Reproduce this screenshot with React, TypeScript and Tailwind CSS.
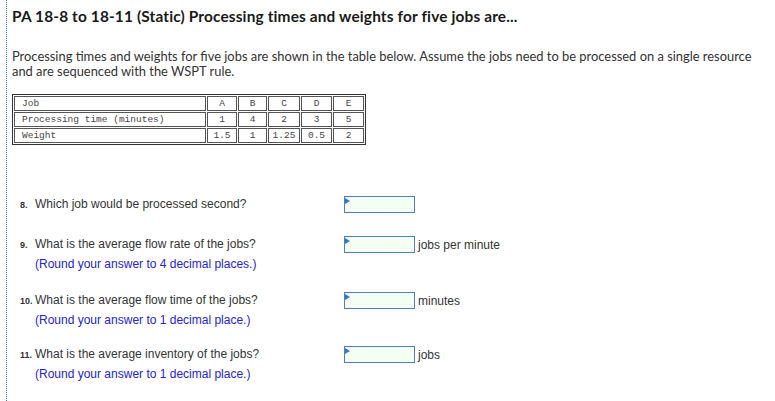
const rows = [
  ["Job", "A", "B", "C", "D", "E"],
  ["Processing time (minutes)", "1", "4", "2", "3", "5"],
  ["Weight", "1.5", "1", "1.25", "0.5", "2"],
];

const colWidths = ["w-[192px]", "w-[30px]", "w-[29px]", "w-[32px]", "w-[31px]", "w-[31px]"];

const questions = [
  { num: "8.", text: "Which job would be processed second?", hint: "", unit: "", mt: "mt-[50px]" },
  { num: "9.", text: "What is the average flow rate of the jobs?", hint: "(Round your answer to 4 decimal places.)", unit: "jobs per minute", mt: "mt-[20px]" },
  { num: "10.", text: "What is the average flow time of the jobs?", hint: "(Round your answer to 1 decimal place.)", unit: "minutes", mt: "mt-[17px]" },
  { num: "11.", text: "What is the average inventory of the jobs?", hint: "(Round your answer to 1 decimal place.)", unit: "jobs", mt: "mt-[15px]" },
];

function AnswerBox() {
  return (
    <span className="relative inline-block h-[17px] w-[71px] border border-[#4f7fc0] bg-[#f4fff4]">
      <span className="absolute left-0 top-[1px] h-0 w-0 border-y-[3px] border-l-[5px] border-y-transparent border-l-[#3f6fc0]" />
    </span>
  );
}

export default function App() {
  return (
    <div className="h-[401px] w-[775px] bg-white">
      <div className="ml-[6px] h-full border-l border-dotted border-[#3b6fc4] pl-[5px]">
        <h1 className="pt-[7px] text-[15.4px] font-bold leading-[18px] tracking-[0.15px] text-[#1a1a1a] [font-family:Lato,'Open_Sans',sans-serif]">
          PA 18-8 to 18-11 (Static) Processing times and weights for five jobs are...
        </h1>
        <p className="mt-[24px] w-[760px] text-[12.9px] leading-[15px] text-[#333] [font-family:Lato,sans-serif]">
          Processing times and weights for five jobs are shown in the table below. Assume the jobs need to be processed on a single resource and are sequenced with the WSPT rule.
        </p>
        <table className="mt-[15px] border-separate border-spacing-[1px] border border-[#333] text-[9.5px] leading-[13px] text-[#444] [font-family:'Liberation_Mono',monospace]">
          <tbody>
            {rows.map((r, i) => (
              <tr key={i}>
                {r.map((c, j) => (
                  <td
                    key={j}
                    className={`${colWidths[j]} h-[14px] border border-[#555] p-0 ${j === 0 ? "pl-[7px] text-left" : "text-center"}`}
                  >
                    {c}
                  </td>
                ))}
              </tr>
            ))}
          </tbody>
        </table>
        <div className="[font-family:'Liberation_Sans',Arial,sans-serif]">
          {questions.map((q) => (
            <div key={q.num} className={`${q.mt} flex`}>
              <div className="w-[332px] pl-[8px]">
                <div className="flex items-baseline text-[12px] leading-[19px]">
                  <span className="w-[15px] text-[9px] font-bold text-[#333]">{q.num}</span>
                  <span className="text-[#333]">{q.text}</span>
                </div>
                {q.hint && <div className="pl-[15px] text-[12px] leading-[19px] text-[#2323d8]">{q.hint}</div>}
              </div>
              <div className="flex h-[19px] items-center">
                <AnswerBox />
                {q.unit && <span className="ml-[3px] text-[12px] text-[#333]">{q.unit}</span>}
              </div>
            </div>
          ))}
        </div>
      </div>
    </div>
  );
}
